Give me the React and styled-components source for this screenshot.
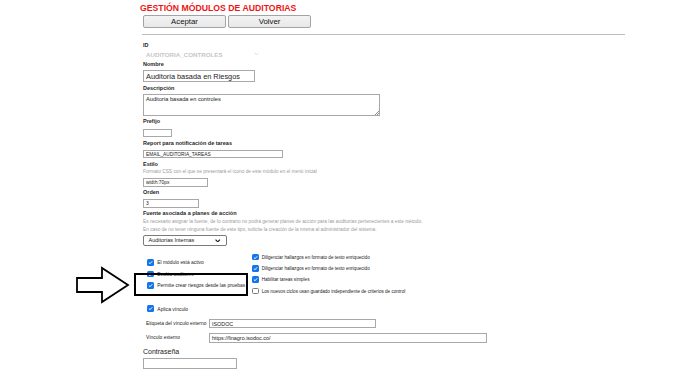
import React from "react";
import styled, { createGlobalStyle } from "styled-components";

const GlobalStyle = createGlobalStyle`
  html, body { margin: 0; padding: 0; background: #fff; }
  body { font-family: "Liberation Sans", Arial, sans-serif; color: #222; overflow: hidden; }
  * { box-sizing: border-box; }
`;

const Page = styled.div`
  position: relative;
  width: 688px;
  height: 382px;
  padding: 3px 0 0 143px;
`;

const Title = styled.h1`
  margin: 0 0 0 -3px;
  font-size: 8.7px;
  line-height: 11px;
  font-weight: bold;
  color: #f01414;
`;

const ButtonRow = styled.div`
  display: flex;
  gap: 2px;
  margin-top: 1px;
`;

const Button = styled.button`
  width: 83px;
  height: 13px;
  padding: 0;
  border: 1px solid #a3a3a3;
  border-radius: 2px;
  background: linear-gradient(#f3f3f3, #e8e8e8);
  font-family: inherit;
  font-size: 7.8px;
  color: #111;
  line-height: 11px;
`;

const Rule = styled.div`
  width: 483px;
  height: 1px;
  margin: 6px 0 0 -1px;
  background: #bdbdbd;
`;

const Label = styled.div`
  margin-top: ${(p) => p.$mt}px;
  font-size: 5.5px;
  line-height: 7px;
  font-weight: bold;
  color: #1e1e1e;
`;

const PlainLabel = styled.div`
  margin-top: ${(p) => p.$mt}px;
  font-size: 7px;
  line-height: 9px;
  color: #222;
`;

const Help = styled.div`
  margin-top: ${(p) => p.$mt}px;
  font-size: 4.8px;
  line-height: ${(p) => p.$lh || 6}px;
  color: #9c9c9c;
`;

const DisabledSelect = styled.div`
  margin-top: 1.5px;
  width: 118px;
  height: 8px;
  padding: 0 2px 0 3px;
  display: flex;
  align-items: center;
  justify-content: space-between;
  font-size: 6.2px;
  font-weight: bold;
  color: #c6c6c6;
`;

const Input = styled.input`
  display: block;
  margin-top: ${(p) => p.$mt || 0}px;
  width: ${(p) => p.$w}px;
  height: ${(p) => p.$h}px;
  padding: 0 2px;
  border: 1px solid #a8a8a8;
  border-radius: 0;
  background: #fff;
  font-family: inherit;
  font-size: ${(p) => p.$fs || 5}px;
  color: #222;
  outline: none;
`;

const AreaWrap = styled.div`
  position: relative;
  margin-top: 2.2px;
  width: 237px;
  height: 22px;
  &::after {
    content: "";
    position: absolute;
    right: 1px;
    bottom: 1px;
    width: 4px;
    height: 4px;
    background: linear-gradient(
      135deg,
      transparent 45%,
      #8a8a8a 45%,
      #8a8a8a 55%,
      transparent 55%,
      transparent 72%,
      #8a8a8a 72%,
      #8a8a8a 82%,
      transparent 82%
    );
  }
`;

const TextArea = styled.textarea`
  display: block;
  width: 100%;
  height: 100%;
  padding: 1px 2px;
  border: 1px solid #a8a8a8;
  resize: none;
  font-family: inherit;
  font-size: 5.67px;
  line-height: 7px;
  color: #222;
  outline: none;
`;

const SelectBox = styled.div`
  margin-top: 1.8px;
  width: 83.5px;
  height: 11px;
  padding: 0 5px 0 4.5px;
  display: flex;
  align-items: center;
  justify-content: space-between;
  border: 1px solid #7a7a7a;
  border-radius: 2px;
  font-size: 5.5px;
  color: #222;
`;

const Checks = styled.div`
  margin-top: 5.5px;
  display: grid;
  grid-template-columns: 109px auto;
  align-items: center;
`;

const CheckColumn = styled.div`
  display: flex;
  flex-direction: column;
  padding-left: ${(p) => p.$pl || 0}px;
`;

const CheckRow = styled.label`
  display: flex;
  align-items: center;
  height: 11.33px;
  gap: ${(p) => p.$gap || 3.5}px;
  font-size: ${(p) => p.$fs || 4.9}px;
  color: #222;
  white-space: nowrap;
`;

const SingleCheck = styled(CheckRow)`
  margin-top: 6.2px;
  padding-left: 4px;
  height: 11.4px;
`;

const Box = styled.span`
  flex: none;
  width: 6.5px;
  height: 6.5px;
  border-radius: 1.5px;
  display: flex;
  align-items: center;
  justify-content: center;
  background: ${(p) => (p.$on ? "#1474ec" : "#fff")};
  border: ${(p) => (p.$on ? "none" : "1px solid #7b7b7b")};
`;

const LinkRow = styled.div`
  display: flex;
  align-items: center;
  margin-top: ${(p) => p.$mt}px;
  padding-left: 3px;
`;

const LinkLabel = styled.span`
  width: 63px;
  font-size: 4.9px;
  color: #222;
  white-space: nowrap;
`;

const Highlight = styled.div`
  position: absolute;
  left: 134px;
  top: 273px;
  width: 114px;
  height: 23px;
  border: 2px solid #000;
`;

const Arrow = styled.svg`
  position: absolute;
  left: 74px;
  top: 265px;
`;

const Check = ({ on }) => (
  <Box $on={on}>
    {on && (
      <svg width="5" height="5" viewBox="0 0 10 10">
        <path d="M1.8 5.2 L4 7.4 L8.4 2.6" fill="none" stroke="#fff" strokeWidth="1.9" />
      </svg>
    )}
  </Box>
);

const Chevron = ({ color, w = 5, sw = 1.2 }) => (
  <svg width={w} height="3.5" viewBox="0 0 10 6">
    <path d="M1 1 L5 5 L9 1" fill="none" stroke={color} strokeWidth={sw * 2} />
  </svg>
);

export default function App() {
  return (
    <>
      <GlobalStyle />
      <Page>
        <Title>GESTIÓN MÓDULOS DE AUDITORIAS</Title>
        <ButtonRow>
          <Button>Aceptar</Button>
          <Button>Volver</Button>
        </ButtonRow>
        <Rule />

        <Label $mt={6.5}>ID</Label>
        <DisabledSelect>
          <span>AUDITORIA_CONTROLES</span>
          <Chevron color="#cfcfcf" sw={0.7} />
        </DisabledSelect>

        <Label $mt={3}>Nombre</Label>
        <Input $mt={2} $w={111.5} $h={12} $fs={7.35} readOnly value="Auditoria basada en Riesgos" />

        <Label $mt={3.3}>Descripción</Label>
        <AreaWrap>
          <TextArea readOnly value="Auditoria basada en controles" />
        </AreaWrap>

        <Label $mt={2}>Prefijo</Label>
        <Input $mt={3.5} $w={28.5} $h={8} readOnly value="" />

        <Label $mt={3.2}>Report para notificación de tareas</Label>
        <Input $mt={3.3} $w={140} $h={8} $fs={4.8} readOnly value="EMAIL_AUDITORIA_TAREAS" />

        <Label $mt={2.5}>Estilo</Label>
        <Help $mt={1.3}>Formato CSS con el que se presentará el ícono de este módulo en el menú inicial</Help>
        <Input $mt={3.2} $w={65} $h={8.3} $fs={4.9} readOnly value="width:70px" />

        <Label $mt={2.7}>Orden</Label>
        <Input $mt={2.5} $w={56} $h={8.7} $fs={4.9} readOnly value="3" />

        <Label $mt={2.5}>Fuente asociada a planes de acción</Label>
        <Help $mt={1} $lh={7.5}>
          Es necesario asignar la fuente, de lo contrario no podrá generar planes de acción para las auditorias pertenecientes a este método.
          <br />
          En caso de no tener ninguna fuente de este tipo, solicite la creación de la misma al administrador del sistema.
        </Help>
        <SelectBox>
          <span>Auditorias Internas</span>
          <Chevron color="#222" w={5.5} sw={1.1} />
        </SelectBox>

        <Checks>
          <CheckColumn $pl={4}>
            <CheckRow $gap={3.8}><Check on />El módulo está activo</CheckRow>
            <CheckRow $gap={3.8}><Check on />Evalúa auditores</CheckRow>
            <CheckRow $gap={3.8}><Check on />Permite crear riesgos desde las pruebas</CheckRow>
          </CheckColumn>
          <CheckColumn>
            <CheckRow $gap={3.2} $fs={4.6}><Check on />Diligenciar hallazgos en formato de texto enriquecido</CheckRow>
            <CheckRow $gap={3.2} $fs={4.6}><Check on />Diligenciar hallazgos en formato de texto enriquecido</CheckRow>
            <CheckRow $gap={3.2} $fs={4.6}><Check on />Habilitar tareas simples</CheckRow>
            <CheckRow $gap={3.2} $fs={4.6}><Check on={false} />Los nuevos ciclos usan guardado independiente de criterios de control</CheckRow>
          </CheckColumn>
        </Checks>

        <SingleCheck $gap={3.8} $fs={5}><Check on />Aplica vínculo</SingleCheck>

        <LinkRow $mt={4.6}>
          <LinkLabel>Etiqueta del vínculo externo</LinkLabel>
          <Input $w={166.7} $h={9.5} $fs={5.4} readOnly value="ISODOC" />
        </LinkRow>
        <LinkRow $mt={4.3}>
          <LinkLabel>Vínculo externo</LinkLabel>
          <Input $w={277.7} $h={9.8} $fs={5.4} readOnly value="https://finagro.isodoc.co/" />
        </LinkRow>

        <PlainLabel $mt={4}>Contraseña</PlainLabel>
        <Input $mt={2.1} $w={94} $h={11.3} readOnly value="" />

        <Highlight />
        <Arrow width="58" height="40" viewBox="0 0 58 40">
          <polygon
            points="3,13 28,13 28,3 54,20 28,37 28,27 3,27"
            fill="#fff"
            stroke="#000"
            strokeWidth="1.8"
            strokeLinejoin="miter"
          />
        </Arrow>
      </Page>
    </>
  );
}
